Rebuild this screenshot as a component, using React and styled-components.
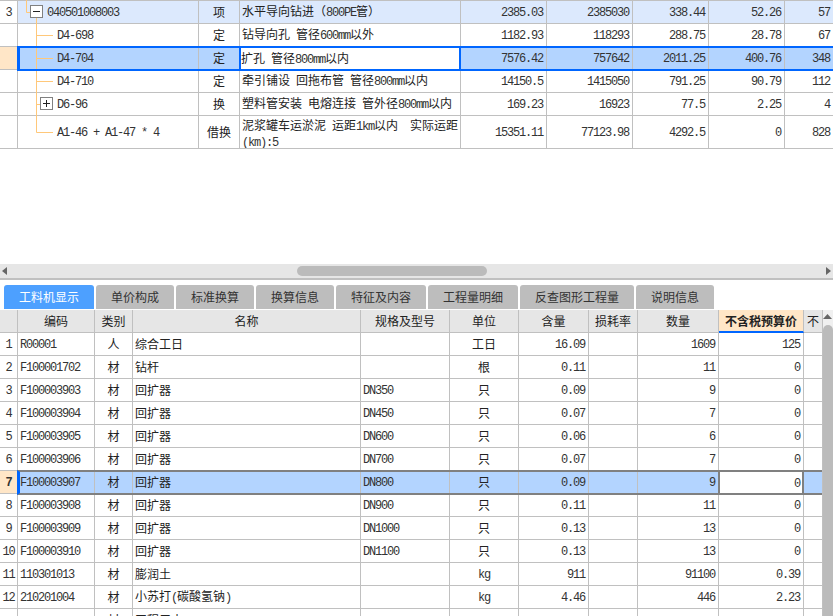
import React from 'react';
import styled, { createGlobalStyle, css } from 'styled-components';

const Global = createGlobalStyle`
  html, body { margin: 0; padding: 0; background: #fff; }
  body { font-family: "Noto Sans CJK SC", "Liberation Sans", sans-serif; font-size: 12px; color: #222; text-spacing-trim: space-all; }
`;
const Page = styled.div`
  width: 833px; height: 616px; overflow: hidden; display: flex; flex-direction: column; background: #fff;
`;
const TOP_COLS = '18px 181px 41px 221px 86px 86px 76px 76px 49px';
const LOW_COLS = '18px 77px 38px 228px 89px 69px 70px 49px 81px 85px 19px';

const TopGrid = styled.div`
  height: 148px; flex: none; border-top: 1px solid #c0c0c0; display: flex; flex-direction: column;
`;
const Row = styled.div`
  display: grid; grid-template-columns: ${p => p.$cols}; height: ${p => p.$h || 23}px; flex: none;
  background: ${p => p.$bg || '#fff'}; position: relative;
`;
const Cell = styled.div`
  position: relative; box-sizing: border-box; min-width: 0; overflow: hidden; white-space: nowrap;
  border-right: 1px solid #c0c0c0; border-bottom: 1px solid #c0c0c0;
  display: flex; align-items: center; line-height: 14px;
  justify-content: ${p => p.$align === 'right' ? 'flex-end' : p.$align === 'center' ? 'center' : 'flex-start'};
  padding: ${p => p.$align === 'right' ? '0 3px 0 0' : p.$align === 'center' ? '0' : '0 0 0 2px'};
  ${p => p.$wrap && css`white-space: normal; align-items: flex-start; padding-top: 2px;`}
  ${p => p.$bg && css`background: ${p.$bg};`}
  ${p => p.$strong && css`font-weight: 700;`}
`;
const Latin = styled.span`
  font-family: "Liberation Mono", monospace; font-size: 12px; letter-spacing: -1.2px; white-space: pre-wrap; color: #333;
`;
const TreeCell = styled(Cell)`
  overflow: visible; padding-left: ${p => p.$indent}px; z-index: 1;
`;
const Connector = styled.svg`
  position: absolute; left: 0; top: 0; overflow: visible; pointer-events: none;
`;
const ToggleBox = styled.svg`
  position: absolute; left: ${p => p.$x}px; top: 4px; background: #fff;
`;
const Highlight = styled.div`
  position: absolute; left: ${p => p.$left}px; right: 0; top: -1px; bottom: -1px; pointer-events: none; z-index: 2;
  border-top: 2px solid ${p => p.$color}; border-bottom: 2px solid ${p => p.$color};
  border-left: 3px solid ${p => p.$edge};
`;
const ActiveCell = styled.div`
  position: absolute; left: ${p => p.$x}px; width: ${p => p.$w}px; top: -1px; bottom: -1px; box-sizing: border-box;
  border: 2px solid ${p => p.$color}; background: #fff; z-index: 3; display: flex; align-items: center;
  justify-content: ${p => p.$right ? 'flex-end' : 'flex-start'};
  padding: ${p => p.$right ? '0 2px 2px 0' : '0 0 2px 0'};
`;
const Blank = styled.div`
  height: 115px; flex: none;
`;
const HScroll = styled.div`
  height: 14px; flex: none; background: #e6e6e6; border-bottom: 2px solid #c0c0c0; position: relative;
  display: flex; align-items: center; justify-content: space-between; padding: 0 2px;
`;
const Thumb = styled.div`
  position: absolute; left: 297px; width: 190px; top: 2px; height: 10px; border-radius: 5px; background: #bbb;
`;
const Tabs = styled.div`
  margin-top: 5px; height: 24px; flex: none; display: flex; gap: 2px; padding-left: 4px;
`;
const Tab = styled.div`
  padding: 0 15px; height: 24px; line-height: 24px; border-radius: 3px 3px 0 0;
  background: ${p => p.$active ? '#4da0ff' : '#bdbdbd'}; color: ${p => p.$active ? '#fff' : '#333'};
`;
const Lower = styled.div`
  margin-top: 1px; flex: 1; min-height: 0; display: flex; overflow: hidden;
`;
const LowGrid = styled.div`
  width: 822px; flex: none; display: flex; flex-direction: column;
`;
const HeadCell = styled(Cell)`
  background: ${p => p.$on ? '#ffe6c7' : '#e6e6e6'}; justify-content: center; padding: 0;
  ${p => p.$on && css`font-weight: 700; border-bottom: 2px solid #0066ff;`}
`;
const VScroll = styled.div`
  width: 11px; flex: none; background: #f0f0f0; display: flex; flex-direction: column; align-items: center;
`;
const VThumb = styled.div`
  margin-top: 6px; width: 10px; flex: 1; border-radius: 5px 5px 0 0; background: #bbb;
`;
const ArrowUp = styled.svg`
  margin-top: 4px; flex: none;
`;

function T({ children }) {
  const parts = String(children).split(/([\x00-\x7f]+)/).filter(Boolean);
  return <span>{parts.map((s, i) => /^[\x00-\x7f]/.test(s) ? <Latin key={i}>{s}</Latin> : s)}</span>;
}
const LINE = '#ffc87a';

function Tree({ h, first, last, elbow, indent, toggle, boxX, children }) {
  return (
    <TreeCell $indent={indent}>
      <Connector width="60" height={h}>
        {first ? (
          <>
            <path d="M8.5 -1V11.5H12" stroke={LINE} fill="none" />
            <path d="M18.5 17V23" stroke={LINE} fill="none" />
          </>
        ) : (
          <path d={`M18.5 -1V${last ? Math.floor(h / 2) + .5 : h}M18.5 ${Math.floor(h / 2) + .5}H${elbow}`} stroke={LINE} fill="none" />
        )}
      </Connector>
      {toggle && (
        <ToggleBox $x={boxX} width="13" height="13">
          <rect x=".5" y=".5" width="12" height="12" fill="#fff" stroke="#808080" />
          <path d={toggle === 'minus' ? 'M3 6.5H10' : 'M3 6.5H10M6.5 3V10'} stroke="#222" fill="none" />
        </ToggleBox>
      )}
      <T>{children}</T>
    </TreeCell>
  );
}

const topRows = [
  { n: '3', code: '040501008003', t: '项', name: '水平导向钻进（800PE管）', v: ['2385.03', '2385030', '338.44', '52.26', '57'], bg: '#dce9fd', first: true, indent: 29, toggle: 'minus', boxX: 12 },
  { code: 'D4-698', t: '定', name: '钻导向孔 管径600mm以外', v: ['1182.93', '118293', '288.75', '28.78', '67'], indent: 39, elbow: 35 },
  { code: 'D4-704', t: '定', name: '扩孔 管径800mm以内', v: ['7576.42', '757642', '2011.25', '400.76', '348'], bg: '#b3d4ff', sel: true, indent: 39, elbow: 35 },
  { code: 'D4-710', t: '定', name: '牵引铺设 回拖布管 管径800mm以内', v: ['14150.5', '1415050', '791.25', '90.79', '112'], indent: 39, elbow: 35 },
  { code: 'D6-96', t: '换', name: '塑料管安装 电熔连接 管外径800mm以内', v: ['169.23', '16923', '77.5', '2.25', '4'], indent: 39, elbow: 24, toggle: 'plus', boxX: 22 },
  { code: 'A1-46 + A1-47 * 4', t: '借换', name: '泥浆罐车运淤泥 运距1km以内  实际运距(km):5', v: ['15351.11', '77123.98', '4292.5', '0', '828'], h: 33, last: true, indent: 39, elbow: 35, wrap: true },
];

const tabs = ['工料机显示', '单价构成', '标准换算', '换算信息', '特征及内容', '工程量明细', '反查图形工程量', '说明信息'];
const heads = ['', '编码', '类别', '名称', '规格及型号', '单位', '含量', '损耗率', '数量', '不含税预算价', '不'];
const lowRows = [
  ['1', 'R00001', '人', '综合工日', '', '工日', '16.09', '1609', '125'],
  ['2', 'F100001702', '材', '钻杆', '', '根', '0.11', '11', '0'],
  ['3', 'F100003903', '材', '回扩器', 'DN350', '只', '0.09', '9', '0'],
  ['4', 'F100003904', '材', '回扩器', 'DN450', '只', '0.07', '7', '0'],
  ['5', 'F100003905', '材', '回扩器', 'DN600', '只', '0.06', '6', '0'],
  ['6', 'F100003906', '材', '回扩器', 'DN700', '只', '0.07', '7', '0'],
  ['7', 'F100003907', '材', '回扩器', 'DN800', '只', '0.09', '9', '0'],
  ['8', 'F100003908', '材', '回扩器', 'DN900', '只', '0.11', '11', '0'],
  ['9', 'F100003909', '材', '回扩器', 'DN1000', '只', '0.13', '13', '0'],
  ['10', 'F100003910', '材', '回扩器', 'DN1100', '只', '0.13', '13', '0'],
  ['11', '110301013', '材', '膨润土', '', 'kg', '911', '91100', '0.39'],
  ['12', '210201004', '材', '小苏打(碳酸氢钠)', '', 'kg', '4.46', '446', '2.23'],
  ['', '', '材', '工程用水', '', '', '', '', ''],
];

export default function App() {
  return (
    <Page>
      <Global />
      <TopGrid>
        {topRows.map((r, i) => (
          <Row key={i} $cols={TOP_COLS} $h={r.h} $bg={r.bg}>
            <Cell $align="center" $bg={r.sel ? '#ffe6c7' : '#fff'}><T>{r.n || ''}</T></Cell>
            <Tree h={r.h || 23} first={r.first} last={r.last} elbow={r.elbow} indent={r.indent} toggle={r.toggle} boxX={r.boxX}>{r.code}</Tree>
            <Cell $align="center">{r.t}</Cell>
            <Cell $wrap={r.wrap}><T>{r.name}</T></Cell>
            {r.v.map((x, j) => <Cell key={j} $align="right"><T>{x}</T></Cell>)}
            {r.sel && <Highlight $left={17} $color="#0066ff" $edge="#0066ff" />}
            {r.sel && <ActiveCell $x={239} $w={222} $color="#0066ff"><T>{r.name}</T></ActiveCell>}
          </Row>
        ))}
      </TopGrid>
      <Blank />
      <HScroll>
        <svg width="5" height="8"><path d="M5 0V8L0 4Z" fill="#666" /></svg>
        <Thumb />
        <svg width="5" height="8"><path d="M0 0V8L5 4Z" fill="#666" /></svg>
      </HScroll>
      <Tabs>
        {tabs.map((t, i) => <Tab key={t} $active={i === 0}>{t}</Tab>)}
      </Tabs>
      <Lower>
        <LowGrid>
          <Row $cols={LOW_COLS} $bg="#e6e6e6">
            {heads.map((h, i) => <HeadCell key={i} $on={i === 9}>{h}</HeadCell>)}
          </Row>
          {lowRows.map((r, i) => {
            const sel = r[0] === '7';
            return (
              <Row key={i} $cols={LOW_COLS} $bg={sel ? '#b3d4ff' : '#fff'}>
                <Cell $align="center" $bg={sel ? '#ffe6c7' : '#fff'} $strong={sel}><T>{r[0]}</T></Cell>
                <Cell><T>{r[1]}</T></Cell>
                <Cell $align="center">{r[2]}</Cell>
                <Cell><T>{r[3]}</T></Cell>
                <Cell><T>{r[4]}</T></Cell>
                <Cell $align="center"><T>{r[5]}</T></Cell>
                <Cell $align="right"><T>{r[6]}</T></Cell>
                <Cell />
                <Cell $align="right"><T>{r[7]}</T></Cell>
                <Cell $align="right"><T>{r[8]}</T></Cell>
                <Cell />
                {sel && <Highlight $left={17} $color="#808080" $edge="#0066ff" />}
                {sel && <ActiveCell $x={718} $w={86} $color="#808080" $right><T>{r[8]}</T></ActiveCell>}
              </Row>
            );
          })}
        </LowGrid>
        <VScroll>
          <ArrowUp width="9" height="5"><path d="M4.5 0L9 5H0Z" fill="#666" /></ArrowUp>
          <VThumb />
        </VScroll>
      </Lower>
    </Page>
  );
}
